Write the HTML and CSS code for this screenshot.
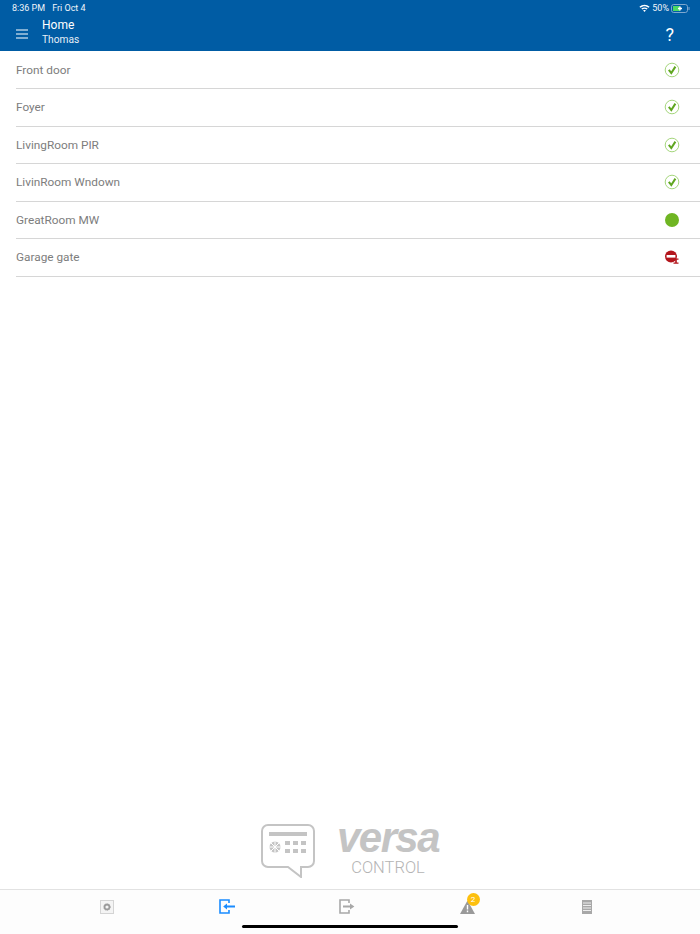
FILE: index.html
```html
<!DOCTYPE html>
<html>
	<head>
		<meta charset="utf-8">
		<title>Home</title>
		<link rel="stylesheet" href="styles.css">
	</head>
	<body>
		<div class="page">
			<header class="header">
				<div class="status">
					<div class="status-time">
						<span>8:36 PM</span>
						<span>Fri Oct 4</span>
					</div>
					<div class="status-right">
						<svg class="wifi" width="11" height="8" viewBox="0 0 11 8">
							<path d="M0.4 2.7C3.3 0 7.7 0 10.6 2.7L9.6 3.8C7.2 1.7 3.8 1.7 1.4 3.8Z" fill="#fff"/>
							<path d="M2.3 4.6C4 3.1 7 3.1 8.7 4.6L7.7 5.6C6.4 4.6 4.6 4.6 3.3 5.6Z" fill="#fff"/>
							<path d="M4.2 6.5C5 5.9 6 5.9 6.8 6.5L5.5 8Z" fill="#fff"/>
						</svg>
						<span>50%</span>
						<svg class="battery" width="19" height="9" viewBox="0 0 19 9">
							<rect x="0.5" y="0.5" width="16" height="8" rx="2.2" fill="none" stroke="#7fa8cf"/>
							<rect x="2" y="2" width="7" height="5" fill="#4cd964"/>
							<path d="M7 4.5H11M9 2.5V6.5" stroke="#fff" stroke-width="1.4"/>
							<rect x="17.5" y="3" width="1" height="3" fill="#7fa8cf"/>
						</svg>
					</div>
				</div>
				<div class="title-bar">
					<svg class="menu" width="12" height="10" viewBox="0 0 12 10">
						<path d="M0 1H12M0 5H12M0 9H12" stroke="#fff" stroke-width="1.2"/>
					</svg>
					<div class="title">
						<div class="title-main">Home</div>
						<div class="title-sub">Thomas</div>
					</div>
					<div class="help">?</div>
				</div>
			</header>

			<ul class="list">
				<li class="row">
					<span>Front door</span>
					<svg class="state" width="16" height="16" viewBox="0 0 16 16">
						<circle cx="8" cy="8" r="6.8" fill="#fff" stroke="#a5d67c" stroke-width="1"/>
						<path d="M4.8 7.8L7.3 11L11.4 4.6" fill="none" stroke="#5fa61f" stroke-width="2"/>
					</svg>
				</li>
				<li class="row">
					<span>Foyer</span>
					<svg class="state" width="16" height="16" viewBox="0 0 16 16">
						<circle cx="8" cy="8" r="6.8" fill="#fff" stroke="#a5d67c" stroke-width="1"/>
						<path d="M4.8 7.8L7.3 11L11.4 4.6" fill="none" stroke="#5fa61f" stroke-width="2"/>
					</svg>
				</li>
				<li class="row">
					<span>LivingRoom PIR</span>
					<svg class="state" width="16" height="16" viewBox="0 0 16 16">
						<circle cx="8" cy="8" r="6.8" fill="#fff" stroke="#a5d67c" stroke-width="1"/>
						<path d="M4.8 7.8L7.3 11L11.4 4.6" fill="none" stroke="#5fa61f" stroke-width="2"/>
					</svg>
				</li>
				<li class="row">
					<span>LivinRoom Wndown</span>
					<svg class="state" width="16" height="16" viewBox="0 0 16 16">
						<circle cx="8" cy="8" r="6.8" fill="#fff" stroke="#a5d67c" stroke-width="1"/>
						<path d="M4.8 7.8L7.3 11L11.4 4.6" fill="none" stroke="#5fa61f" stroke-width="2"/>
					</svg>
				</li>
				<li class="row">
					<span>GreatRoom MW</span>
					<svg class="state" width="16" height="16" viewBox="0 0 16 16">
						<circle cx="8" cy="8" r="7" fill="#6fb523"/>
					</svg>
				</li>
				<li class="row">
					<span>Garage gate</span>
					<svg class="state" width="16" height="16" viewBox="0 0 16 16">
						<circle cx="7" cy="7.5" r="6" fill="#b3151c"/>
						<rect x="2.6" y="6" width="8.8" height="2.6" fill="#fff"/>
						<path d="M9.5 9.5H14.5V10.8H12.8V13.4H14.5V14.7H9.5V13.4H11.2V10.8H9.5Z" fill="#b3151c"/>
					</svg>
				</li>
			</ul>

			<div class="logo">
				<svg class="logo-panel" width="54" height="54" viewBox="0 0 54 54">
					<path d="M7 1H47A6 6 0 0 1 53 7V37A6 6 0 0 1 47 43H40V53L27 43H7A6 6 0 0 1 1 37V7A6 6 0 0 1 7 1Z" fill="none" stroke="#c4c4c4" stroke-width="2"/>
					<rect x="8" y="8" width="38" height="4" fill="#c4c4c4"/>
					<circle cx="14" cy="23" r="5.5" fill="#c4c4c4"/>
					<path d="M14 17.5V28.5M8.5 23H19.5M10 19L18 27M18 19L10 27" stroke="#fff" stroke-width="1"/>
					<path d="M24 17H29V21H24ZM32 17H37V21H32ZM40 17H45V21H40ZM24 25H29V29H24ZM32 25H37V29H32ZM40 25H45V29H40Z" fill="#c4c4c4"/>
				</svg>
				<div class="logo-text">
					<div class="logo-name">versa</div>
					<div class="logo-sub">CONTROL</div>
				</div>
			</div>

			<nav class="tabs">
				<div class="tab">
					<svg width="14" height="14" viewBox="0 0 14 14">
						<rect x="0.5" y="0.5" width="13" height="13" fill="#f4f4f4" stroke="#d4d4d4"/>
						<circle cx="7" cy="7" r="2.4" fill="none" stroke="#9a9a9a" stroke-width="1.6"/>
						<circle cx="7" cy="7" r="3.4" fill="none" stroke="#9a9a9a" stroke-width="0.8" stroke-dasharray="1 1"/>
					</svg>
				</div>
				<div class="tab">
					<svg width="16" height="15" viewBox="0 0 16 15">
						<path d="M10 4V1H1V14H10V11" fill="none" stroke="#1a8cff" stroke-width="1.6"/>
						<path d="M16 6.5H8V4.6L4.2 7.5L8 10.4V8.5H16Z" fill="#1a8cff"/>
					</svg>
				</div>
				<div class="tab">
					<svg width="16" height="15" viewBox="0 0 16 15">
						<path d="M10 4V1H1V14H10V11" fill="none" stroke="#a8a8a8" stroke-width="1.6"/>
						<path d="M4 6.5H11V4.6L15.4 7.5L11 10.4V8.5H4Z" fill="#a8a8a8"/>
					</svg>
				</div>
				<div class="tab">
					<div class="alert">
						<svg width="15" height="14" viewBox="0 0 15 14">
							<path d="M7.5 0.5L15 14H0Z" fill="#9a9a9a"/>
							<path d="M6.8 5H8.2V9.6H6.8ZM6.8 10.6H8.2V12.2H6.8Z" fill="#fff"/>
						</svg>
						<span class="badge">2</span>
					</div>
				</div>
				<div class="tab">
					<svg width="10" height="14" viewBox="0 0 10 14">
						<rect width="10" height="14" fill="#a8a8a8"/>
						<path d="M1 3H9M1 5.5H9M1 8H9M1 10.5H9" stroke="#fff" stroke-width="0.8"/>
					</svg>
				</div>
			</nav>
			<div class="home-bar"></div>
		</div>
	</body>
</html>
```

FILE: styles.css
```css
* {
	margin: 0;
	padding: 0;
	box-sizing: border-box;
}

body {
	font-family: "Roboto", "Liberation Sans", sans-serif;
	background: #fff;
}

.page {
	width: 700px;
	height: 934px;
	display: flex;
	flex-direction: column;
	position: relative;
	overflow: hidden;
}

.header {
	height: 51px;
	background: #005ca4;
	color: #fff;
}

.status {
	height: 16px;
	padding: 0 10px 0 12px;
	display: flex;
	justify-content: space-between;
	align-items: center;
	font-size: 9px;
	color: #f0f5fa;
}

.status-time {
	display: flex;
	gap: 7px;
}

.status-right {
	display: flex;
	align-items: center;
	gap: 2px;
}

.title-bar {
	height: 35px;
	padding: 0 26px 0 16px;
	display: flex;
	align-items: center;
}

.menu {
	margin-right: 14px;
}

.title {
	flex: 1;
	padding-bottom: 3px;
}

.title-main {
	font-size: 12px;
	line-height: 15px;
}

.title-sub {
	font-size: 10.2px;
	line-height: 13px;
	color: #e6eef6;
}

.help {
	font-size: 18px;
	padding-top: 2px;
}

.list {
	list-style: none;
	padding: 0.5px 0 0 16px;
}

.row {
	height: 37.5px;
	padding-right: 20px;
	display: flex;
	justify-content: space-between;
	align-items: center;
	font-size: 11.8px;
	color: #7d7d7d;
	border-bottom: 1px solid #d6d6d6;
}

.logo {
	margin-top: auto;
	height: 65px;
	display: flex;
	justify-content: center;
	gap: 22px;
}

.logo-text {
	width: 102px;
	display: flex;
	flex-direction: column;
	align-items: center;
}

.logo-name {
	font-family: "Liberation Sans", sans-serif;
	font-size: 42px;
	font-weight: 700;
	font-style: italic;
	height: 27px;
	line-height: 27px;
	letter-spacing: -1.6px;
	color: #c4c4c4;
}

.logo-sub {
	font-size: 16.5px;
	font-weight: 300;
	line-height: 20px;
	color: #b4b4b4;
	margin-top: 7px;
}

.tabs {
	height: 45px;
	padding-left: 47px;
	display: flex;
	background: #fdfdfd;
	border-top: 1px solid #e2e2e2;
}

.tab {
	width: 120px;
	height: 33px;
	display: flex;
	justify-content: center;
	align-items: center;
}

.alert {
	position: relative;
	display: flex;
}

.badge {
	position: absolute;
	top: -7px;
	left: 7px;
	width: 13px;
	height: 13px;
	border-radius: 50%;
	background: #fdc00f;
	color: #fff;
	font-size: 8px;
	line-height: 13px;
	text-align: center;
}

.home-bar {
	position: absolute;
	left: 242px;
	top: 925px;
	width: 216px;
	height: 3px;
	border-radius: 2px;
	background: #000;
}
```
